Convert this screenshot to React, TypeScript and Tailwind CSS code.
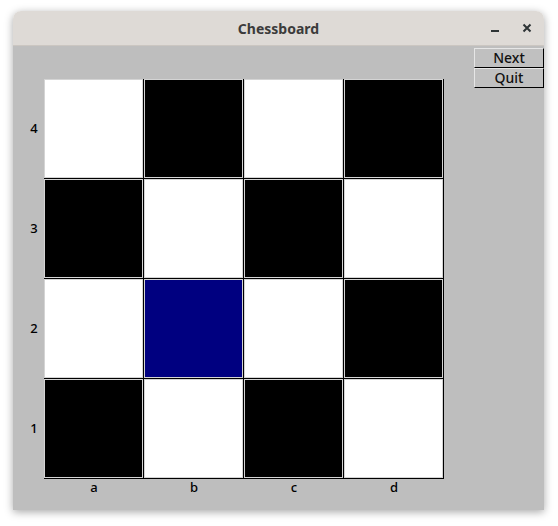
const ranks = [4, 3, 2, 1];
const files = ["a", "b", "c", "d"];

function cellColor(rank: number, file: number) {
  if (rank === 2 && file === 1) return "bg-[#000080]";
  return (rank + file) % 2 === 0 ? "bg-white" : "bg-black";
}

function Square({ rank, file }: { rank: number; file: number }) {
  return (
    <div className="h-[100px] w-[100px] border-b border-r border-black">
      <div className={`h-full w-full border border-[#d4d4d4] ${cellColor(rank, file)}`} />
    </div>
  );
}

function TkButton({ label }: { label: string }) {
  return (
    <button
      type="button"
      className="h-[20px] w-[70px] border border-b-black border-l-[#e6e6e6] border-r-black border-t-[#e6e6e6] bg-[#c0c0c0] text-[14px] font-medium leading-none text-[#111]"
    >
      {label}
    </button>
  );
}

export default function App() {
  return (
    <div
      className="h-[526px] w-[558px] bg-white pl-[13px] pt-[11px]"
      style={{ fontFamily: '"Noto Sans", "DejaVu Sans", sans-serif' }}
    >
      <div className="flex h-[499px] w-[531px] flex-col overflow-hidden rounded-t-[8px] shadow-[0_2px_8px_rgba(0,0,0,0.35)]">
        <div className="relative flex h-[35px] shrink-0 items-center justify-center border-b border-[#cbc6c1] bg-[#dedad6]">
          <span className="text-[14px] font-bold text-[#3b3b3b]">Chessboard</span>
          <div className="absolute right-[12px] top-0 flex h-full items-center gap-[22px] text-[#2e3436]">
            <svg width="10" height="10" viewBox="0 0 10 10">
              <rect x="1" y="7" width="8" height="2" fill="currentColor" />
            </svg>
            <svg width="10" height="10" viewBox="0 0 10 10">
              <path d="M1.5 1.5 L8.5 8.5 M8.5 1.5 L1.5 8.5" stroke="currentColor" strokeWidth="2" />
            </svg>
          </div>
        </div>
        <div className="flex flex-1 bg-[#bebebe] pl-[11px]">
          <div className="pt-[33px]">
            <div className="flex">
              <div className="flex w-[20px] flex-col">
                {ranks.map((r) => (
                  <div key={r} className="flex h-[100px] items-center justify-center text-[13px] font-medium text-black">
                    {r}
                  </div>
                ))}
              </div>
              <div className="flex flex-col">
                {ranks.map((r) => (
                  <div key={r} className="flex">
                    {files.map((f, i) => (
                      <Square key={f} rank={r} file={i} />
                    ))}
                  </div>
                ))}
              </div>
            </div>
            <div className="ml-[20px] flex">
              {files.map((f) => (
                <div key={f} className="flex h-[18px] w-[100px] items-center justify-center text-[13px] font-medium text-black">
                  {f}
                </div>
              ))}
            </div>
          </div>
          <div className="ml-auto flex flex-col pt-[2px]">
            <TkButton label="Next" />
            <TkButton label="Quit" />
          </div>
        </div>
      </div>
    </div>
  );
}
